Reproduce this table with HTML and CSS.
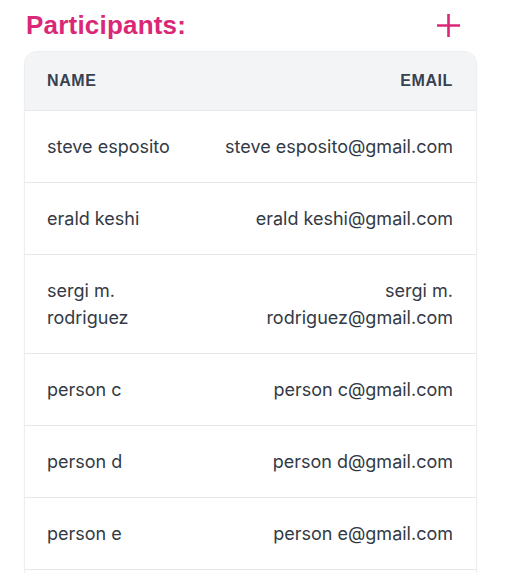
FILE: index.html
```html
<!DOCTYPE html>
<html>
<head>
<meta charset="utf-8">
<link rel="stylesheet" href="styles.css">
</head>
<body>
<div class="wrap">
  <div class="head">
    <h2 class="title">Participants:</h2>
    <button class="add" aria-label="Add participant">
      <svg width="25" height="25" viewBox="0 0 25 25"><path d="M12.5 1v23M1 12.5h23" stroke="#db2777" stroke-width="2.6" fill="none"/></svg>
    </button>
  </div>
  <div class="card">
    <table class="tbl">
      <colgroup><col class="c1"><col class="c2"></colgroup>
      <thead>
        <tr><th class="l">Name</th><th class="r">Email</th></tr>
      </thead>
      <tbody>
        <tr><td class="l">steve esposito</td><td class="r">steve esposito@gmail.com</td></tr>
        <tr><td class="l">erald keshi</td><td class="r">erald keshi@gmail.com</td></tr>
        <tr><td class="l">sergi m. rodriguez</td><td class="r">sergi m. rodriguez@gmail.com</td></tr>
        <tr><td class="l">person c</td><td class="r">person c@gmail.com</td></tr>
        <tr><td class="l">person d</td><td class="r">person d@gmail.com</td></tr>
        <tr><td class="l">person e</td><td class="r">person e@gmail.com</td></tr>
        <tr><td class="l">person f</td><td class="r">person f@gmail.com</td></tr>
      </tbody>
    </table>
  </div>
</div>
</body>
</html>
```
FILE: styles.css
```css
* { box-sizing: border-box; }
html, body { margin: 0; padding: 0; background: #fff; }
body { font-family: Inter, "Noto Sans", sans-serif; color: #374151; }
.wrap { padding: 7px 29px 0 25px; width: 505px; }
.head { display: flex; justify-content: space-between; align-items: center; height: 36px; margin-bottom: 9px; }
.title { margin: 0 0 0 1px; font-family: "Liberation Sans", Arial, sans-serif; font-weight: 700; font-size: 26px; color: #db2777; letter-spacing: 0.2px; }
.add { border: 0; background: none; padding: 0; margin-right: 15px; display: flex; }
.card { border-radius: 12px; overflow: hidden; box-shadow: 0 0 0 1px #eceef1, 0 1px 3px rgba(0,0,0,0.06); }
.tbl { width: 100%; border-collapse: collapse; table-layout: fixed; }
.c1 { width: 171px; }
th { background: #f3f4f6; font-family: "Liberation Sans", Arial, sans-serif; font-size: 16px; font-weight: 700; text-transform: uppercase; color: #374151; padding: 19px 23px 19px 22px; line-height: 20px; letter-spacing: 0.6px; }
td { font-size: 18px; line-height: 27px; padding: 22px 23px 22px 22px; border-top: 1px solid #e5e7eb; color: #333a45; }
.l { text-align: left; }
.r { text-align: right; }
```
